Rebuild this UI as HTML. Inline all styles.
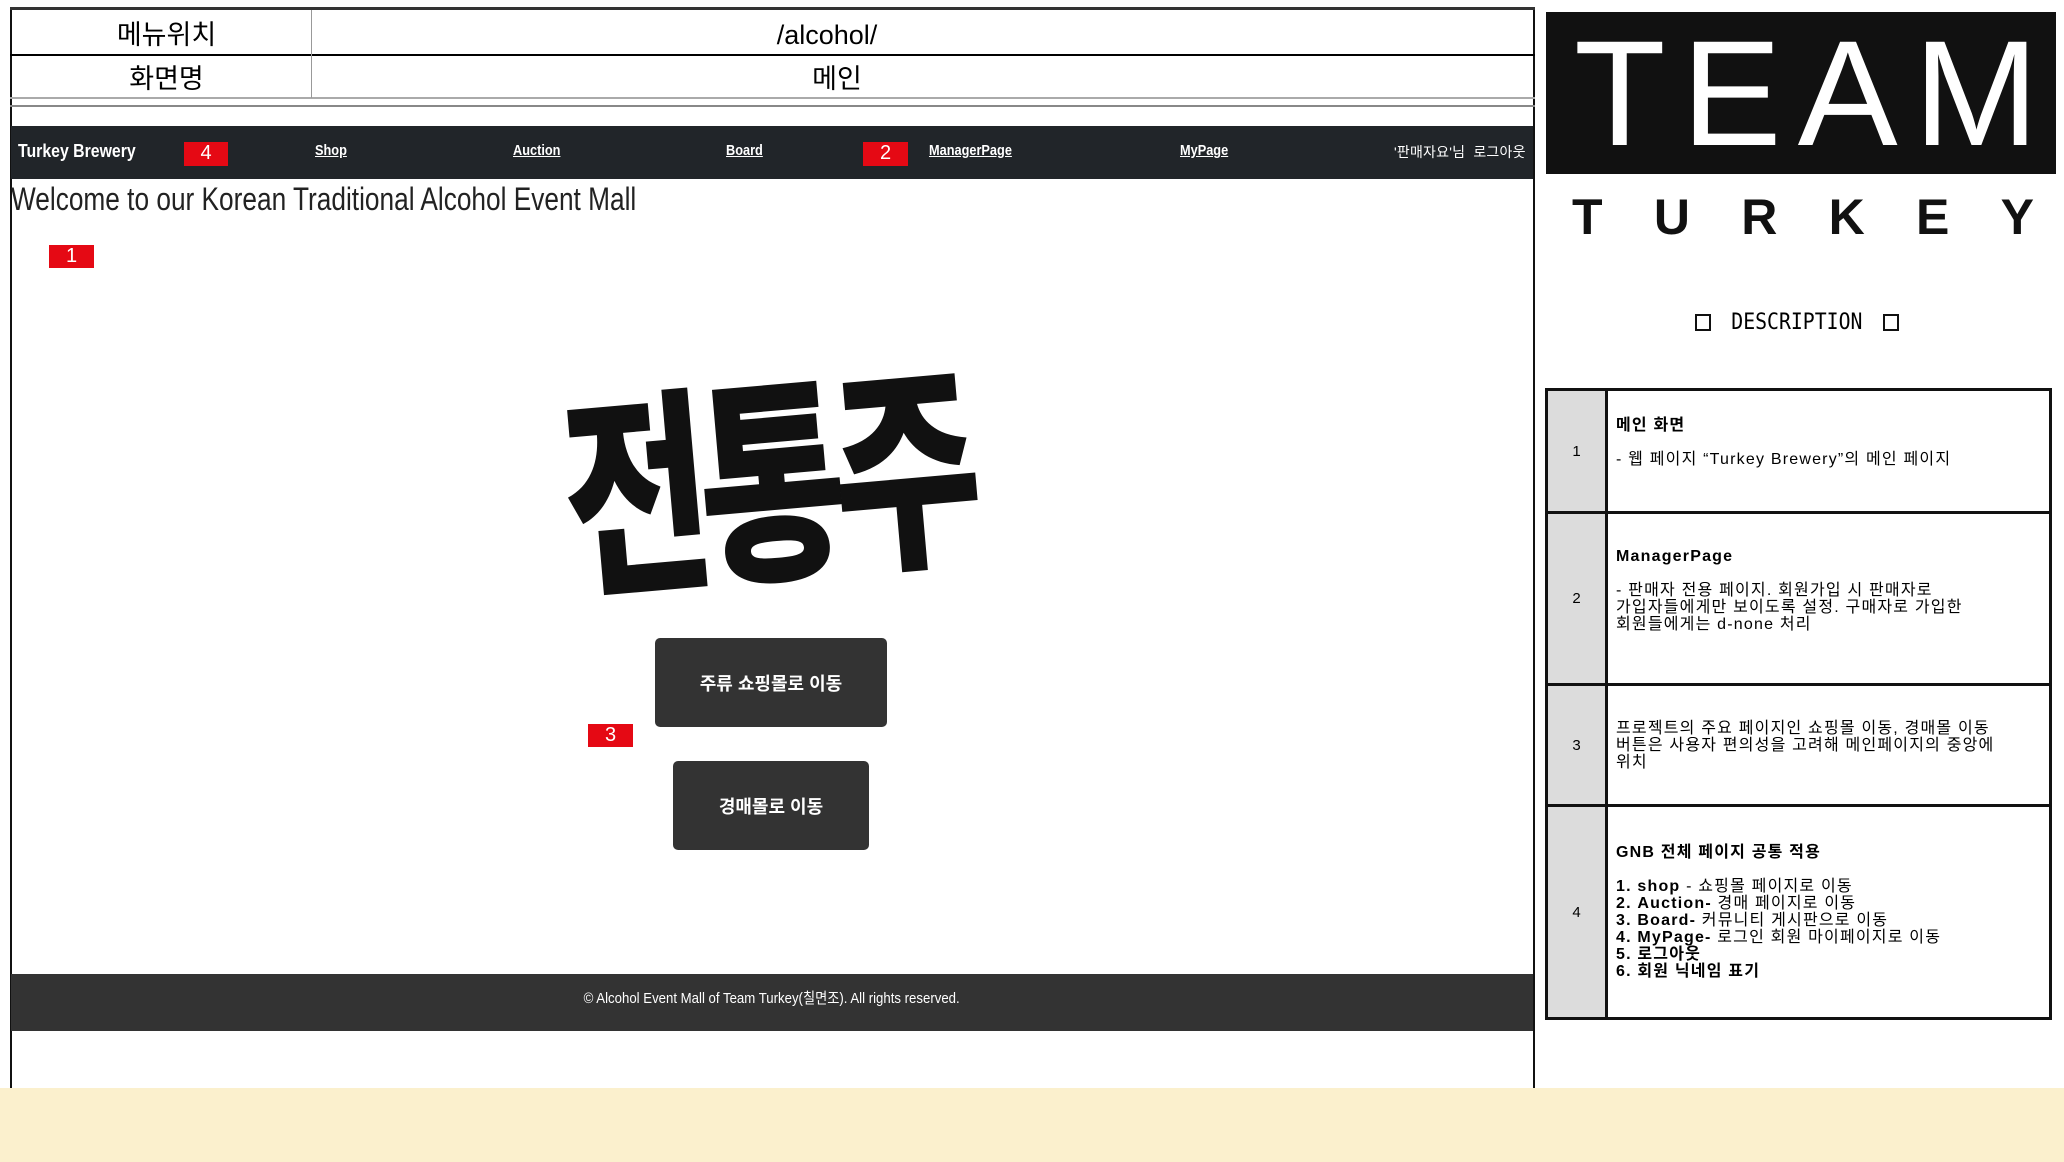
<!DOCTYPE html>
<html><head><meta charset="utf-8"><style>
*{margin:0;padding:0;box-sizing:border-box}
body{width:2064px;height:1162px;position:relative;background:#fff;font-family:"Liberation Sans","Noto Sans CJK KR",sans-serif;overflow:hidden}
.a{position:absolute}
.red{position:absolute;background:#e50914;color:#fff;font-size:20px;text-align:center;line-height:23px}
.btn{position:absolute;background:#333;color:#fff;border-radius:5px;font-weight:bold;font-size:18px;display:flex;align-items:center;justify-content:center}
.nav{color:#fff;font-size:15px;font-weight:bold;text-decoration:underline;top:142px;transform:scaleX(.85);transform-origin:left}
table.d{position:absolute;left:1545px;top:388px;width:507px;border-collapse:collapse;font-family:"Liberation Sans","Noto Sans CJK KR",sans-serif;font-size:16px;line-height:17px}
table.d td{border:3px solid #111;vertical-align:middle}
table.d td.n{background:#dcdcdc;width:60px;text-align:center;font-size:15px}
table.d td.t{padding-left:8px;letter-spacing:1.2px}
.bx{display:inline-block;width:16px;height:17px;border:2px solid #111;vertical-align:-2px}
</style></head><body>
<div class="a" style="left:10px;top:8px;width:2px;height:1080px;background:#111"></div>
<div class="a" style="left:1533px;top:8px;width:2px;height:1080px;background:#111"></div>
<div class="a" style="left:10px;top:7px;width:1525px;height:3px;background:#333"></div>
<div class="a" style="left:10px;top:54px;width:1525px;height:2px;background:#000"></div>
<div class="a" style="left:10px;top:97px;width:1525px;height:2px;background:#aaa"></div>
<div class="a" style="left:10px;top:105px;width:1525px;height:2px;background:#888"></div>
<div class="a" style="left:311px;top:10px;width:1px;height:88px;background:#999"></div>
<div class="a" style="left:17px;top:12px;width:299px;height:44px;font-size:27px;text-align:center;line-height:46px">메뉴위치</div>
<div class="a" style="left:312px;top:12px;width:1030px;height:44px;font-size:27px;text-align:center;line-height:46px">/alcohol/</div>
<div class="a" style="left:17px;top:56px;width:299px;height:42px;font-size:27px;text-align:center;line-height:46px">화면명</div>
<div class="a" style="left:312px;top:56px;width:1050px;height:42px;font-size:27px;text-align:center;line-height:46px">메인</div>
<div class="a" style="left:11px;top:126px;width:1522px;height:53px;background:#212529"></div>
<div class="a" style="left:18px;top:141px;color:#fff;font-size:18px;font-weight:bold;transform:scaleX(.88);transform-origin:left">Turkey Brewery</div>
<div class="red" style="left:184px;top:142px;width:44px;height:24px">4</div>
<div class="a nav" style="left:315px">Shop</div>
<div class="a nav" style="left:513px">Auction</div>
<div class="a nav" style="left:726px">Board</div>
<div class="red" style="left:863px;top:142px;width:45px;height:24px">2</div>
<div class="a nav" style="left:929px">ManagerPage</div>
<div class="a nav" style="left:1180px">MyPage</div>
<div class="a" style="left:1394px;top:142px;color:#fff;font-size:14px;letter-spacing:.2px">'판매자요'님&nbsp; 로그아웃</div>
<div class="a" style="left:11px;top:181px;font-size:32px;color:#222;white-space:nowrap;transform:scaleX(.82);transform-origin:left">Welcome to our Korean Traditional Alcohol Event Mall</div>
<div class="red" style="left:49px;top:245px;width:45px;height:23px">1</div>
<div class="a" style="left:540px;top:335px;width:450px;height:270px;font-family:'Noto Sans CJK KR',sans-serif;font-weight:900;font-size:160px;color:#111;line-height:270px;text-align:center;transform:rotate(-5deg) scaleY(1.35);letter-spacing:-12px">전통주</div>
<div class="btn" style="left:655px;top:638px;width:232px;height:89px">주류 쇼핑몰로 이동</div>
<div class="red" style="left:588px;top:724px;width:45px;height:23px">3</div>
<div class="btn" style="left:673px;top:761px;width:196px;height:89px">경매몰로 이동</div>
<div class="a" style="left:11px;top:974px;width:1522px;height:57px;background:#333;color:#fff;font-size:15px;text-align:center;line-height:50px"><span style="display:inline-block;transform:scaleX(.88)">© Alcohol Event Mall of Team Turkey(칠면조). All rights reserved.</span></div>
<div class="a" style="left:0;top:1088px;width:2064px;height:74px;background:#fbf0cd"></div>
<div class="a" style="left:1546px;top:12px;width:510px;height:162px;background:#111;color:#fff;font-size:150px;line-height:162px;letter-spacing:16px;padding-left:28px;white-space:nowrap;overflow:hidden">TEAM</div>
<div class="a" style="left:1572px;top:190px;width:462px;font-size:50px;font-weight:bold;color:#111;display:flex;justify-content:space-between;line-height:55px"><span>T</span><span>U</span><span>R</span><span>K</span><span>E</span><span>Y</span></div>
<div class="a" style="left:1530px;top:310px;width:534px;text-align:center;font-family:'DejaVu Sans Mono',monospace;font-size:22px;color:#000"><span class="bx"></span> <span style="display:inline-block;transform:scaleX(.9)">DESCRIPTION</span> <span class="bx"></span></div>
<table class="d">
<tr style="height:123px"><td class="n">1</td><td class="t"><b>메인 화면</b><br><br>- 웹 페이지 “Turkey Brewery”의 메인 페이지<br><br></td></tr>
<tr style="height:172px"><td class="n">2</td><td class="t"><b>ManagerPage</b><br><br>- 판매자 전용 페이지. 회원가입 시 판매자로<br>가입자들에게만 보이도록 설정. 구매자로 가입한<br>회원들에게는 d-none 처리<br><br></td></tr>
<tr style="height:121px"><td class="n">3</td><td class="t">프로젝트의 주요 페이지인 쇼핑몰 이동, 경매몰 이동<br>버튼은 사용자 편의성을 고려해 메인페이지의 중앙에<br>위치</td></tr>
<tr style="height:213px"><td class="n">4</td><td class="t"><b>GNB 전체 페이지 공통 적용</b><br><br><b>1. shop</b> - 쇼핑몰 페이지로 이동<br><b>2. Auction-</b> 경매 페이지로 이동<br><b>3. Board-</b> 커뮤니티 게시판으로 이동<br><b>4. MyPage-</b> 로그인 회원 마이페이지로 이동<br><b>5. 로그아웃<br>6. 회원 닉네임 표기</b></td></tr>
</table>
</body></html>
